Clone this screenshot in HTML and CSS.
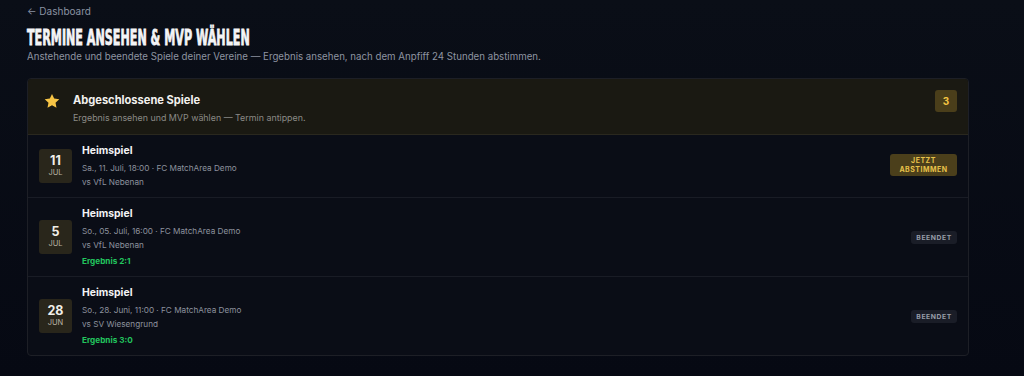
FILE: index.html
```html
<!DOCTYPE html>
<html lang="de">
<head>
    <meta charset="UTF-8">
    <meta name="viewport" content="width=device-width, initial-scale=1.0">
    <title>Termine ansehen &amp; MVP wählen</title>
    <link rel="stylesheet" href="styles.css">
</head>
<body>
    <div class="page">
        <a class="back-link" href="#">&larr; Dashboard</a>
        <h1 class="page-title"><span>Termine ansehen &amp; MVP wählen</span></h1>
        <p class="page-sub">Anstehende und beendete Spiele deiner Vereine — Ergebnis ansehen, nach dem Anpfiff 24 Stunden abstimmen.</p>

        <div class="games-card">
            <div class="games-head">
                <svg class="star" width="18" height="18" viewBox="0 0 24 24">
                    <path d="M12 2.5l2.9 6.2 6.8.8-5 4.7 1.3 6.7L12 17.6l-6 3.3 1.3-6.7-5-4.7 6.8-.8z" fill="#f6c445"/>
                </svg>
                <div class="head-text">
                    <div class="head-title">Abgeschlossene Spiele</div>
                    <div class="head-sub">Ergebnis ansehen und MVP wählen — Termin antippen.</div>
                </div>
                <span class="count-badge">3</span>
            </div>

            <div class="game-row">
                <div class="date-box">
                    <span class="day">11</span>
                    <span class="month">JUL</span>
                </div>
                <div class="game-info">
                    <div class="game-title">Heimspiel</div>
                    <div class="game-meta">Sa., 11. Juli, 18:00 · FC MatchArea Demo</div>
                    <div class="game-meta">vs VfL Nebenan</div>
                </div>
                <button class="vote-btn">JETZT<br>ABSTIMMEN</button>
            </div>

            <div class="game-row">
                <div class="date-box">
                    <span class="day">5</span>
                    <span class="month">JUL</span>
                </div>
                <div class="game-info">
                    <div class="game-title">Heimspiel</div>
                    <div class="game-meta">So., 05. Juli, 16:00 · FC MatchArea Demo</div>
                    <div class="game-meta">vs VfL Nebenan</div>
                    <div class="game-result">Ergebnis 2:1</div>
                </div>
                <span class="status-tag">BEENDET</span>
            </div>

            <div class="game-row">
                <div class="date-box">
                    <span class="day">28</span>
                    <span class="month">JUN</span>
                </div>
                <div class="game-info">
                    <div class="game-title">Heimspiel</div>
                    <div class="game-meta">So., 28. Juni, 11:00 · FC MatchArea Demo</div>
                    <div class="game-meta">vs SV Wiesengrund</div>
                    <div class="game-result">Ergebnis 3:0</div>
                </div>
                <span class="status-tag">BEENDET</span>
            </div>
        </div>
    </div>
</body>
</html>
```

FILE: styles.css
```css
body {
    margin: 0;
    font-family: Inter, "Noto Sans", sans-serif;
    background: linear-gradient(180deg, #0a0e17 0%, #060913 100%);
    color: #e9e9ec;
    min-height: 100vh;
}
.page {
    width: 942px;
    padding: 4px 0 0 27px;
}
.back-link {
    display: block;
    font-size: 10px;
    color: #8b93a3;
    text-decoration: none;
    line-height: 14px;
}
.page-title {
    margin: 9px 0 0;
    font-family: "DejaVu Sans Condensed", "DejaVu Sans", sans-serif;
    font-weight: bold;
    font-size: 21px;
    line-height: 22px;
    text-transform: uppercase;
    color: #f4f4f6;
    white-space: nowrap;
}
.page-title span {
    display: inline-block;
    transform: scaleX(0.59);
    transform-origin: left center;
    -webkit-text-stroke: 0.8px #f4f4f6;
}
.page-sub {
    margin: 1px 0 0;
    font-size: 9.7px;
    line-height: 14px;
    color: #8e94a1;
}
.games-card {
    margin-top: 14px;
    border: 1px solid #1d1f26;
    border-radius: 4px;
    background: #0a0d16;
    overflow: hidden;
}
.games-head {
    display: flex;
    align-items: flex-start;
    gap: 12px;
    padding: 13px 11px 10px 15px;
    background: #1a1912;
    border-bottom: 1px solid #2a281e;
}
.star {
    flex: none;
}
.head-text {
    flex: 1;
}
.head-title {
    font-size: 11.1px;
    font-weight: 700;
    color: #f2f1ee;
    line-height: 16px;
}
.head-sub {
    margin-top: 3px;
    font-size: 8.9px;
    color: #8a8a86;
    line-height: 13px;
}
.count-badge {
    margin-top: -2px;
    width: 22px;
    height: 22px;
    border-radius: 3px;
    background: #4a3e1a;
    color: #f5c542;
    font-size: 10px;
    font-weight: 700;
    display: flex;
    align-items: center;
    justify-content: center;
}
.game-row {
    display: flex;
    align-items: center;
    gap: 10px;
    padding: 9px 11px 8px 11px;
    border-bottom: 1px solid #191c25;
}
.game-row:last-child {
    border-bottom: none;
}
.date-box {
    width: 33px;
    height: 34px;
    margin-top: -2px;
    border-radius: 3px;
    background: #29261b;
    display: flex;
    flex-direction: column;
    align-items: center;
    justify-content: center;
    flex: none;
}
.day {
    font-size: 12.5px;
    font-weight: 700;
    line-height: 14px;
    color: #f1efe8;
}
.month {
    font-size: 7.5px;
    line-height: 10px;
    color: #b9b4a4;
}
.game-info {
    flex: 1;
}
.game-title {
    font-size: 10.4px;
    font-weight: 700;
    line-height: 14px;
    color: #f3f3f5;
    margin-bottom: 3px;
}
.game-meta {
    font-size: 8.2px;
    line-height: 14px;
    color: #8d929e;
}
.game-result {
    margin-top: 3px;
    font-size: 8.2px;
    font-weight: 700;
    line-height: 13px;
    color: #22c55e;
}
.vote-btn {
    width: 67px;
    height: 22px;
    margin-top: -3px;
    border: none;
    border-radius: 3px;
    background: #4b3f1b;
    color: #e8c24a;
    font-family: inherit;
    font-size: 7px;
    font-weight: 700;
    letter-spacing: 0.5px;
    line-height: 9px;
    padding: 0;
    cursor: pointer;
}
.status-tag {
    padding: 3px 5px;
    border-radius: 3px;
    background: #1a1d27;
    color: #979ca8;
    font-size: 6.8px;
    font-weight: 700;
    letter-spacing: 0.6px;
    line-height: 7px;
}
```
